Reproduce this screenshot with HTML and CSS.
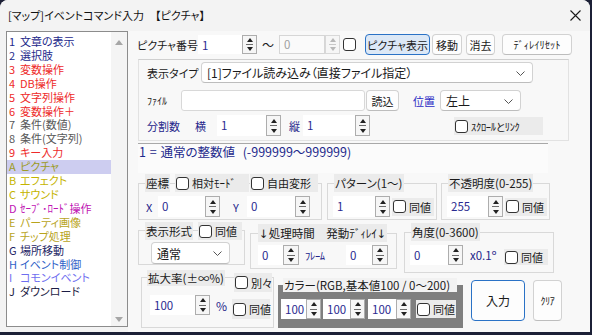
FILE: index.html
```html
<!DOCTYPE html>
<html lang="ja">

<head>
    <meta charset="UTF-8">
    <meta name="viewport" content="width=device-width, initial-scale=1.0">
    <title>イベントコマンド入力</title>
    <link rel="stylesheet" href="styles.css">
</head>

<body>
    <div class="window">
        <div class="titlebar">
            <span class="title">[マップ]イベントコマンド入力　【ピクチャ】</span>
            <svg class="close" width="11" height="11" viewBox="0 0 11 11">
                <path d="M0.5 0.5L10.5 10.5M10.5 0.5L0.5 10.5" stroke="#1a1a1a" stroke-width="1.1" fill="none" />
            </svg>
        </div>

        <div class="client">
            <div class="cmdlist">
                <ul class="cmds">
                    <li class="k-navy"><b>1</b>文章の表示</li>
                    <li class="k-navy"><b>2</b>選択肢</li>
                    <li class="k-red"><b>3</b>変数操作</li>
                    <li class="k-red"><b>4</b>DB操作</li>
                    <li class="k-red"><b>5</b>文字列操作</li>
                    <li class="k-red"><b>6</b>変数操作＋</li>
                    <li class="k-gray"><b>7</b>条件(数値)</li>
                    <li class="k-gray"><b>8</b>条件(文字列)</li>
                    <li class="k-red"><b>9</b>キー入力</li>
                    <li class="k-olive selected"><b>A</b>ピクチャ</li>
                    <li class="k-yellow"><b>B</b>エフェクト</li>
                    <li class="k-yellow"><b>C</b>サウンド</li>
                    <li class="k-magenta"><b>D</b>ｾｰﾌﾞ･ﾛｰﾄﾞ操作</li>
                    <li class="k-gold"><b>E</b>パーティ画像</li>
                    <li class="k-gold"><b>F</b>チップ処理</li>
                    <li class="k-navy2"><b>G</b>場所移動</li>
                    <li class="k-blue"><b>H</b>イベント制御</li>
                    <li class="k-violet"><b>I</b>コモンイベント</li>
                    <li class="k-ink"><b>J</b>ダウンロード</li>
                </ul>
                <div class="vscroll">
                    <span class="arrow up"></span>
                    <span class="arrow down"></span>
                </div>
            </div>

            <div class="pane">
                <!-- picture number row -->
                <div class="toprow">
                    <span class="lbl picno">ピクチャ番号</span>
                    <span class="spin h19"><span class="val w44">1</span><span class="sb"><i></i><i></i></span></span>
                    <span class="tilde">～</span>
                    <span class="spin h19 off"><span class="val w46">0</span><span class="sb"><i></i><i></i></span></span>
                    <span class="cb cb-top"></span>
                    <button class="btn blue b-show">ピクチャ表示</button>
                    <button class="btn b-move">移動</button>
                    <button class="btn b-erase">消去</button>
                    <button class="btn b-reset">ﾃﾞｨﾚｲﾘｾｯﾄ</button>
                </div>

                <!-- display type panel -->
                <div class="panel">
                    <div class="prow">
                        <span class="lbl l-type">表示タイプ</span>
                        <span class="select s-type">[1]ファイル読み込み（直接ファイル指定）
                            <svg class="chev" width="9" height="5" viewBox="0 0 9 5"><path d="M0.5 0.5L4.5 4.5L8.5 0.5" stroke="#555" fill="none" /></svg>
                        </span>
                    </div>
                    <div class="prow r-file">
                        <span class="lbl l-file">ﾌｧｲﾙ</span>
                        <span class="field f-file"></span>
                        <button class="btn b-load">読込</button>
                        <span class="lbl l-pos">位置</span>
                        <span class="select s-pos">左上
                            <svg class="chev" width="9" height="5" viewBox="0 0 9 5"><path d="M0.5 0.5L4.5 4.5L8.5 0.5" stroke="#555" fill="none" /></svg>
                        </span>
                    </div>
                    <div class="prow r-div">
                        <span class="lbl navy l-div">分割数</span>
                        <span class="lbl navy l-h">横</span>
                        <span class="spin"><span class="val w49">1</span><span class="sb"><i></i><i></i></span></span>
                        <span class="lbl navy l-v">縦</span>
                        <span class="spin"><span class="val w52">1</span><span class="sb"><i></i><i></i></span></span>
                        <span class="chk c-scroll"><span class="cb"></span><span class="hw">ｽｸﾛｰﾙとﾘﾝｸ</span></span>
                    </div>
                </div>

                <div class="memo">1 = 通常の整数値 &nbsp;(-999999～999999)</div>

                <!-- groups, first line -->
                <div class="grow g-row1">
                    <div class="grp g-pos">
                        <div class="gtitle">
                            <span class="tag">座標</span>
                            <span class="chk c-rel"><span class="cb"></span>相対ﾓｰﾄﾞ</span>
                            <span class="chk c-free"><span class="cb"></span>自由変形</span>
                        </div>
                        <div class="gbody">
                            <span class="lbl navy l-x">X</span>
                            <span class="spin"><span class="val w47">0</span><span class="sb"><i></i><i></i></span></span>
                            <span class="lbl navy l-y">Y</span>
                            <span class="spin"><span class="val w48">0</span><span class="sb"><i></i><i></i></span></span>
                        </div>
                    </div>
                    <div class="grp g-pat">
                        <div class="gtitle"><span class="tag">パターン(1～)</span></div>
                        <div class="gbody">
                            <span class="spin"><span class="val w42">1</span><span class="sb"><i></i><i></i></span></span>
                            <span class="chk c-same"><span class="cb"></span>同値</span>
                        </div>
                    </div>
                    <div class="grp g-opa">
                        <div class="gtitle"><span class="tag">不透明度(0-255)</span></div>
                        <div class="gbody">
                            <span class="spin"><span class="val w41">255</span><span class="sb"><i></i><i></i></span></span>
                            <span class="chk c-same"><span class="cb"></span>同値</span>
                        </div>
                    </div>
                </div>

                <!-- groups, second line -->
                <div class="grow g-row2">
                    <div class="grp g-mode">
                        <div class="gtitle">
                            <span class="tag">表示形式</span>
                            <span class="chk c-same2"><span class="cb"></span>同値</span>
                        </div>
                        <div class="gbody">
                            <span class="select s-mode">通常
                                <svg class="chev" width="9" height="5" viewBox="0 0 9 5"><path d="M0.5 0.5L4.5 4.5L8.5 0.5" stroke="#555" fill="none" /></svg>
                            </span>
                        </div>
                    </div>
                    <div class="grp g-time">
                        <div class="gtitle"><span class="tag"><span class="arr">↓</span>処理時間　発動<span class="hw">ﾃﾞｨﾚｲ</span><span class="arr">↓</span></span></div>
                        <div class="gbody">
                            <span class="spin h20"><span class="val w25">0</span><span class="sb w16"><i></i><i></i></span></span>
                            <span class="lbl navy hw l-frame">ﾌﾚｰﾑ</span>
                            <span class="spin h20"><span class="val w26">0</span><span class="sb w16"><i></i><i></i></span></span>
                        </div>
                    </div>
                    <div class="grp g-ang">
                        <div class="gtitle"><span class="tag">角度(0-3600)</span></div>
                        <div class="gbody">
                            <span class="spin h20"><span class="val w38">0</span><span class="sb"><i></i><i></i></span></span>
                            <span class="lbl navy l-unit">x0.1º</span>
                            <span class="chk c-same3"><span class="cb"></span>同値</span>
                        </div>
                    </div>
                </div>

                <!-- groups, third line -->
                <div class="grow g-row3">
                    <div class="grp g-zoom">
                        <div class="gtitle">
                            <span class="tag">拡大率(±∞%)</span>
                            <span class="chk c-each"><span class="cb"></span>別々</span>
                        </div>
                        <div class="gbody">
                            <span class="spin h20"><span class="val w45">100</span><span class="sb"><i></i><i></i></span></span>
                            <span class="lbl navy l-pct">%</span>
                            <span class="chk c-same4"><span class="cb"></span>同値</span>
                        </div>
                    </div>
                    <div class="color-box">
                        <div class="ctitle">カラー(RGB,基本値100 / 0～200)</div>
                        <div class="cbody">
                            <span class="spin h20"><span class="val w25">100</span><span class="sb"><i></i><i></i></span></span>
                            <span class="spin h20 sp-g"><span class="val w27">100</span><span class="sb"><i></i><i></i></span></span>
                            <span class="spin h20 sp-b"><span class="val w28">100</span><span class="sb"><i></i><i></i></span></span>
                            <span class="chk c-same5"><span class="cb"></span>同値</span>
                        </div>
                    </div>
                    <button class="btn big b-enter">入力</button>
                    <button class="btn big b-clear"><span class="hw">ｸﾘｱ</span></button>
                </div>
            </div>
        </div>
    </div>
</body>

</html>
```

FILE: styles.css
```css
* {
    box-sizing: border-box;
}

body {
    margin: 0;
    background-color: #1c2036;
    font-family: "Noto Sans CJK JP", "DejaVu Sans", sans-serif;
    font-feature-settings: "palt";
    font-size: 11px;
    color: #1a1a1a;
}

.window {
    width: 590px;
    height: 332px;
    background-color: #f8f8f8;
    border-radius: 8px 8px 0 0;
    overflow: hidden;
}

.titlebar {
    height: 30px;
    display: flex;
    align-items: center;
    justify-content: space-between;
    padding: 0 9px 0 8px;
    background-color: #f3f3f3;
}

.title {
    font-size: 11px;
    color: #111;
}

.client {
    display: flex;
    padding: 1px 0 0 6px;
    height: 302px;
    background-color: #f3f3f3;
}

/* command list */
.cmdlist {
    width: 122px;
    height: 296px;
    border: 1px solid #8c8c8c;
    background-color: #fff;
    display: flex;
    flex-shrink: 0;
}

.cmds {
    list-style: none;
    margin: 0;
    padding: 3px 0 0 0;
    flex: 1;
}

.cmds li {
    display: flex;
    line-height: 13.9px;
    padding-left: 2px;
    font-size: 11px;
    white-space: nowrap;
}

.cmds li b {
    font-weight: normal;
    width: 11px;
    flex-shrink: 0;
}

.cmds li.selected {
    background-color: #cdcdf0;
}

.k-navy { color: #1e2a8c; }
.k-red { color: #ee2a2a; }
.k-gray { color: #585858; }
.k-olive { color: #9c9a24; }
.k-yellow { color: #c4b400; }
.k-magenta { color: #c014b4; }
.k-gold { color: #b8a41c; }
.k-navy2 { color: #1c2464; }
.k-blue { color: #2f62c8; }
.k-violet { color: #6e6ef0; }
.k-ink { color: #1c1c44; }

.vscroll {
    width: 16px;
    background-color: #f4f4f4;
    display: flex;
    flex-direction: column;
    justify-content: space-between;
    align-items: center;
    padding: 8px 0 4px;
}

.arrow {
    width: 0;
    height: 0;
    border-left: 4px solid transparent;
    border-right: 4px solid transparent;
}

.arrow.up {
    border-bottom: 5px solid #a6a6a6;
}

.arrow.down {
    border-top: 5px solid #a6a6a6;
}

/* right side */
.pane {
    flex: 1;
    padding: 3px 0 0 10px;
    background-color: #f8f8f8;
}

.lbl {
    white-space: nowrap;
}

.navy {
    color: #25258a;
}

.hw {
    letter-spacing: -0.3px;
}

.arr {
    font-family: "DejaVu Sans", sans-serif;
    color: #1a1a1a;
}

.toprow {
    display: flex;
    align-items: center;
    height: 21px;
    margin-left: -1px;
}

.picno {
    width: 61px;
}

.tilde {
    width: 22px;
    text-align: center;
    font-size: 12px;
}

/* spin box */
.spin {
    display: inline-flex;
    height: 21px;
    flex-shrink: 0;
}

.spin.h19 { height: 19px; }
.spin.h20 { height: 20px; }

.spin .val {
    background-color: #fff;
    color: #2a2a90;
    padding-left: 4px;
    line-height: 20px;
    font-size: 11.5px;
}

.spin.off .val {
    border: 1px solid #d6d6d6;
    color: #a0a0a0;
    background-color: #fafafa;
    line-height: 17px;
}

.sb {
    width: 15px;
    display: flex;
    flex-direction: column;
    border: 1px solid #adadad;
    background-color: #f6f6f6;
}

.sb.w16 { width: 16px; }

.sb i {
    flex: 1;
    display: flex;
    align-items: center;
    justify-content: center;
}

.sb i + i {
    border-top: 1px solid #6c6c6c;
    margin: 0 3px;
}

.sb i::before {
    content: "";
    border-left: 3.5px solid transparent;
    border-right: 3.5px solid transparent;
    border-bottom: 4px solid #202020;
}

.sb i + i::before {
    border-bottom: none;
    border-top: 4px solid #202020;
}

.spin.off .sb {
    border-color: #d8d8d8;
}

.spin.off .sb i::before {
    border-bottom-color: #b8b8b8;
}

.spin.off .sb i + i::before {
    border-top-color: #b8b8b8;
}

.spin.off .sb i + i {
    border-top-color: #c8c8c8;
}

.w25 { width: 25px; }
.w26 { width: 26px; }
.w27 { width: 27px; }
.w28 { width: 28px; }
.w38 { width: 38px; }
.w41 { width: 41px; }
.w42 { width: 42px; }
.w44 { width: 44px; }
.w45 { width: 45px; }
.w46 { width: 46px; }
.w47 { width: 47px; }
.w48 { width: 48px; }
.w49 { width: 49px; }
.w52 { width: 52px; }

/* checkbox */
.cb {
    width: 13px;
    height: 13px;
    border: 1px solid #333;
    border-radius: 3px;
    background-color: #fff;
    flex-shrink: 0;
}

.cb-top {
    margin-left: 3px;
}

.chk {
    display: inline-flex;
    align-items: center;
    gap: 3px;
    height: 18px;
    padding-left: 1px;
    background-color: #ebebeb;
    white-space: nowrap;
    flex-shrink: 0;
}

/* buttons */
.btn {
    font: inherit;
    font-feature-settings: "palt";
    height: 21px;
    padding: 0;
    border: 1px solid #d2d2d2;
    border-bottom-color: #bdbdbd;
    border-radius: 4px;
    background-color: #fdfdfd;
    color: #1a1a1a;
    white-space: nowrap;
    flex-shrink: 0;
}

.btn.blue {
    background-color: #dce8f6;
    border-color: #2a72c6;
}

.b-show { margin-left: 9px; width: 65px; }
.b-move { margin-left: 2px; width: 30px; }
.b-erase { margin-left: 4px; width: 29px; }
.b-reset { margin-left: 7px; width: 70px; font-size: 10.5px; }

/* display type panel */
.panel {
    margin-top: 4px;
    width: 431px;
    height: 82px;
    border: 1px solid #e2e2e2;
    border-top-color: #cfcfcf;
    background-color: #f8f8f8;
    padding: 2px 0 0 8px;
}

.prow {
    display: flex;
    align-items: center;
    height: 21px;
}

.r-file {
    margin-top: 7px;
}

.r-div {
    margin-top: 4px;
}

.l-type { width: 54px; }
.l-file { width: 34px; font-size: 10px; }
.l-pos { margin-left: 14px; width: 27px; color: #2b2bc4; }
.l-div { width: 48px; }
.l-h { width: 22px; }
.l-v { margin-left: 8px; width: 14px; }

.select {
    position: relative;
    display: flex;
    align-items: center;
    height: 21px;
    padding-left: 5px;
    border: 1px solid #d2d2d2;
    border-bottom-color: #bdbdbd;
    border-radius: 4px;
    background-color: #fff;
    font-size: 12px;
    white-space: nowrap;
}

.chev {
    position: absolute;
    right: 7px;
    top: 8px;
}

.s-type { width: 332px; }
.s-pos { width: 81px; }

.field {
    height: 21px;
    border: 1px solid #d8d8d8;
    border-radius: 3px;
    background-color: #fff;
}

.f-file { width: 184px; }

.b-load { width: 33px; margin-left: 1px; }

.c-scroll {
    margin-left: 84px;
    width: 89px;
    font-size: 10.5px;
    align-self: flex-end;
    margin-bottom: 1px;
}

.memo {
    margin-top: 2px;
    width: 410px;
    height: 30px;
    border-top: 1px solid #a8a8a8;
    background-color: #fbfbfb;
    color: #1e2a8c;
    font-size: 12.5px;
    line-height: 14px;
    padding: 1px 0 0 1px;
    white-space: nowrap;
    word-spacing: 1px;
}

/* group boxes */
.grow {
    display: flex;
    align-items: flex-start;
}

.grp {
    border: 1px solid #d9d9d9;
    flex-shrink: 0;
}

.gtitle {
    display: flex;
    align-items: center;
    height: 18px;
    margin-top: -10px;
    padding-left: 6px;
}

.tag {
    display: inline-block;
    height: 18px;
    line-height: 18px;
    padding: 0 1px;
    background-color: #ebebeb;
    white-space: nowrap;
    font-size: 11.5px;
}

.gbody {
    display: flex;
    align-items: center;
}

.g-row1 {
    margin-top: 10px;
}

.g-pos { width: 184px; height: 37px; }
.g-pos .gbody { margin-top: 4px; padding-left: 7px; }
.c-rel { margin-left: 5px; width: 74px; }
.c-free { margin-left: 1px; width: 68px; }
.l-x { width: 12px; }
.l-y { margin-left: 13px; width: 14px; }

.g-pat { margin-left: 5px; width: 110px; height: 37px; }
.g-pat .gbody { margin-top: 4px; padding-left: 5px; }
.c-same { margin-left: 2px; width: 42px; }

.g-opa { margin-left: 4px; width: 109px; height: 37px; }
.g-opa .gbody { margin-top: 4px; padding-left: 5px; }

.g-mode { margin-top: 10px; width: 107px; height: 35px; }
.g-mode .gtitle { margin-top: -9px; }
.g-mode .gbody { margin-top: 2px; padding-left: 12px; }
.c-same2 { margin-left: 5px; width: 44px; }
.s-mode { width: 79px; height: 22px; }

.g-time { margin-left: 5px; margin-top: 13px; width: 147px; height: 36px; }
.g-time .gtitle { padding-left: 7px; }
.g-time .gbody { margin-top: 3px; padding-left: 7px; }
.l-frame { margin-left: 6px; width: 41px; font-size: 10.5px; }

.g-ang { margin-left: 7px; margin-top: 12px; width: 150px; height: 41px; }
.g-ang .gbody { margin-top: 4px; padding-left: 5px; }
.l-unit { margin-left: 7px; width: 34px; font-size: 11.5px; }
.c-same3 { width: 44px; height: 16px; align-self: flex-end; }

.g-zoom { margin-left: 3px; margin-top: 4px; width: 133px; height: 51px; }
.g-zoom .gtitle { align-items: flex-start; margin-top: -8px; height: 20px; padding-left: 5px; }
.g-zoom .tag { height: 16px; line-height: 16px; }
.c-each { margin-left: 9px; margin-top: 3px; width: 38px; height: 19px; }
.g-zoom .gbody { margin-top: 5px; padding-left: 8px; }
.l-pct { margin-left: 6px; width: 16px; font-size: 12px; }
.c-same4 { width: 38px; height: 20px; align-self: flex-end; margin-bottom: -4px; }

.color-box {
    margin-left: 4px;
    margin-top: 12px;
    width: 185px;
    height: 43px;
    background-color: #7f7f7f;
    flex-shrink: 0;
}

.ctitle {
    margin: -7px 0 0 5px;
    width: 174px;
    height: 14px;
    line-height: 14px;
    background-color: #f2f2f2;
    white-space: nowrap;
    font-size: 11.5px;
    padding-left: 1px;
}

.cbody {
    display: flex;
    align-items: center;
    margin-top: 7px;
    padding-left: 3px;
}

.sp-g { margin-left: 2px; }
.sp-b { margin-left: 3px; }
.c-same5 { margin-left: 5px; width: 40px; }

.btn.big {
    height: 41px;
    margin-top: 7px;
}

.b-enter {
    margin-left: 8px;
    width: 54px;
    border-color: #2a72c6;
    font-size: 12px;
}

.b-clear {
    margin-left: 8px;
    width: 29px;
    font-size: 10px;
}
```
